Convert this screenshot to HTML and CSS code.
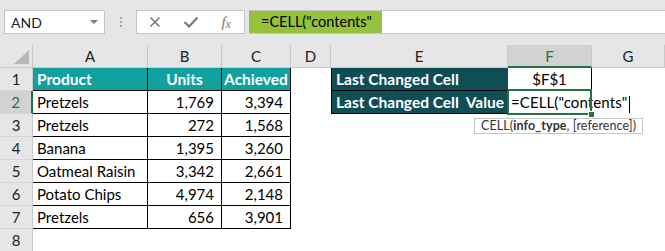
FILE: index.html
```html
<!DOCTYPE html>
<html>
<head>
<meta charset="utf-8">
<link rel="stylesheet" href="styles.css">
</head>
<body>
<div class="toolbar">
  <div class="namebox"><span>AND</span><span class="caret"></span></div>
  <div class="grip"><i></i><i></i><i></i></div>
  <div class="btns">
    <span class="slot"><svg width="12" height="12" viewBox="0 0 12 12"><path d="M1.5 1.5L10.5 10.5M10.5 1.5L1.5 10.5" stroke="#7a7a7a" stroke-width="1.6" fill="none"/></svg></span>
    <span class="slot"><svg width="16" height="12" viewBox="0 0 16 12"><path d="M1.5 6L6 10.5L14.5 1.5" stroke="#7a7a7a" stroke-width="2.2" fill="none"/></svg></span>
    <span class="slot fx"><i>f</i><i class="sub">x</i></span>
  </div>
  <div class="fbar"><span class="ftext">=CELL("contents"</span></div>
</div>
<div class="sheet">
  <div class="corner"><svg width="18" height="16" viewBox="0 0 18 16"><path d="M17 1L17 15L2 15Z" fill="#b8b8b8"/></svg></div>
  <div class="ch">A</div><div class="ch">B</div><div class="ch">C</div><div class="ch">D</div><div class="ch">E</div><div class="ch sel">F</div><div class="ch">G</div>

  <div class="rh">1</div>
  <div class="cell t hd">Product</div><div class="cell t hd ctr">Units</div><div class="cell t hd ctr">Achieved</div><div class="cell"></div>
  <div class="cell lbl">Last Changed Cell</div><div class="cell t ctr">$F$1</div><div class="cell"></div>

  <div class="rh sel">2</div>
  <div class="cell t">Pretzels</div><div class="cell t num">1,769</div><div class="cell t num">3,394</div><div class="cell"></div>
  <div class="cell lbl">Last Changed Cell&nbsp; Value</div>
  <div class="cell active">=CELL("contents"<span class="caretline"></span><span class="handle"></span>
    <div class="tip">CELL(<b>info_type</b>, [reference])</div>
  </div>
  <div class="cell"></div>

  <div class="rh">3</div>
  <div class="cell t">Pretzels</div><div class="cell t num">272</div><div class="cell t num">1,568</div><div class="cell"></div><div class="cell"></div><div class="cell"></div><div class="cell"></div>

  <div class="rh">4</div>
  <div class="cell t">Banana</div><div class="cell t num">1,395</div><div class="cell t num">3,260</div><div class="cell"></div><div class="cell"></div><div class="cell"></div><div class="cell"></div>

  <div class="rh">5</div>
  <div class="cell t">Oatmeal Raisin</div><div class="cell t num">3,342</div><div class="cell t num">2,661</div><div class="cell"></div><div class="cell"></div><div class="cell"></div><div class="cell"></div>

  <div class="rh">6</div>
  <div class="cell t">Potato Chips</div><div class="cell t num">4,974</div><div class="cell t num">2,148</div><div class="cell"></div><div class="cell"></div><div class="cell"></div><div class="cell"></div>

  <div class="rh">7</div>
  <div class="cell t">Pretzels</div><div class="cell t num">656</div><div class="cell t num">3,901</div><div class="cell"></div><div class="cell"></div><div class="cell"></div><div class="cell"></div>

  <div class="rh">8</div>
  <div class="cell"></div><div class="cell"></div><div class="cell"></div><div class="cell"></div><div class="cell"></div><div class="cell"></div><div class="cell"></div>
</div>
</body>
</html>
```

FILE: styles.css
```css
body {
  margin: 0;
  width: 665px;
  height: 251px;
  overflow: hidden;
  background: #fff;
  font-family: Lato, "Liberation Sans", sans-serif;
  color: #000;
}

.toolbar {
  height: 45px;
  box-sizing: border-box;
  padding-top: 10px;
  background: #e6e6e6;
  display: flex;
  align-items: flex-start;
}

.namebox {
  margin-left: 4px;
  width: 101px;
  height: 24px;
  box-sizing: border-box;
  background: #fff;
  border: 1px solid #c6c6c6;
  display: flex;
  align-items: center;
  justify-content: space-between;
  padding: 0 6px 0 6px;
  font-size: 14px;
  color: #222;
}

.caret {
  width: 0;
  height: 0;
  border-left: 4px solid transparent;
  border-right: 4px solid transparent;
  border-top: 4px solid #7a7a7a;
}

.grip {
  width: 31px;
  display: flex;
  flex-direction: column;
  align-items: center;
  gap: 2px;
  padding-top: 7px;
}

.grip i {
  display: block;
  width: 2px;
  height: 2px;
  background: #a8a8a8;
}

.btns {
  width: 109px;
  height: 24px;
  box-sizing: border-box;
  background: #fff;
  border: 1px solid #c6c6c6;
  display: flex;
  align-items: center;
}

.slot {
  width: 36px;
  display: flex;
  justify-content: center;
  align-items: center;
}

.fx {
  font-family: "Liberation Serif", serif;
  color: #7a7a7a;
  font-size: 15px;
}

.fx .sub {
  font-size: 12px;
  position: relative;
  top: 2px;
}

.fbar {
  margin-left: 4px;
  flex: 1;
  height: 24px;
  box-sizing: border-box;
  background: #fff;
  border-top: 1px solid #c6c6c6;
  border-bottom: 1px solid #c6c6c6;
  display: flex;
}

.ftext {
  width: 133px;
  box-sizing: border-box;
  background: #95c13d;
  padding-left: 12px;
  font-size: 14.5px;
  line-height: 22px;
  color: #000;
}

.sheet {
  display: grid;
  grid-template-columns: 33px 115px 74px 69px 40px 177px 84px 73px;
  grid-template-rows: repeat(9, 23px);
}

.corner {
  background: #e6e6e6;
  border-right: 1px solid #c8c8c8;
  border-bottom: 1px solid #c8c8c8;
  box-sizing: border-box;
  display: flex;
  align-items: flex-end;
  justify-content: flex-end;
  padding: 0 2px 2px 0;
}

.ch {
  background: #e6e6e6;
  box-sizing: border-box;
  border-right: 1px solid #c8c8c8;
  border-bottom: 1px solid #c8c8c8;
  text-align: center;
  font-size: 15px;
  line-height: 23px;
  color: #222;
}

.ch.sel {
  background: #d2d2d2;
  border-bottom: 2px solid #217346;
  color: #217346;
}

.rh {
  background: #e6e6e6;
  box-sizing: border-box;
  border-right: 1px solid #c8c8c8;
  border-bottom: 1px solid #d4d4d4;
  text-align: center;
  font-size: 15px;
  line-height: 22px;
  color: #222;
}

.rh.sel {
  background: #d2d2d2;
  border-right: 2px solid #217346;
  color: #217346;
}

.cell {
  box-sizing: border-box;
  font-size: 15px;
  line-height: 22px;
  padding: 0 4px;
  white-space: nowrap;
}

.t {
  border-right: 1px solid #000;
  border-bottom: 1px solid #000;
}

.hd {
  background: #10a19e;
  color: #fff;
  font-weight: 700;
  font-size: 15.5px;
}

.ctr {
  text-align: center;
  padding: 0;
}

.num {
  text-align: right;
  padding-right: 7px;
}

.lbl {
  background: #0e4e54;
  color: #fff;
  font-weight: 700;
  font-size: 15.5px;
  border-left: 1px solid #000;
  border-bottom: 1px solid #000;
}

.active {
  position: relative;
  overflow: visible;
  padding-left: 3px;
  letter-spacing: 0.1px;
  z-index: 2;
}

.active::before {
  content: "";
  position: absolute;
  left: -1px;
  top: -2px;
  right: 0;
  bottom: -1px;
  border: 2px solid #217346;
  pointer-events: none;
}

.caretline {
  display: inline-block;
  width: 1px;
  height: 17px;
  background: #000;
  vertical-align: middle;
  margin-left: 2px;
}

.handle {
  position: absolute;
  right: -3px;
  bottom: -4px;
  width: 5px;
  height: 5px;
  background: #217346;
  border: 1px solid #fff;
}

.tip {
  position: absolute;
  left: -34px;
  top: 27px;
  height: 16px;
  box-sizing: border-box;
  border: 1px solid #c6c6c6;
  background: #fff;
  padding: 0 6px;
  font-size: 12.5px;
  line-height: 14px;
  color: #333;
  letter-spacing: 0.1px;
  white-space: nowrap;
}

.tip b {
  font-weight: 700;
}
```
